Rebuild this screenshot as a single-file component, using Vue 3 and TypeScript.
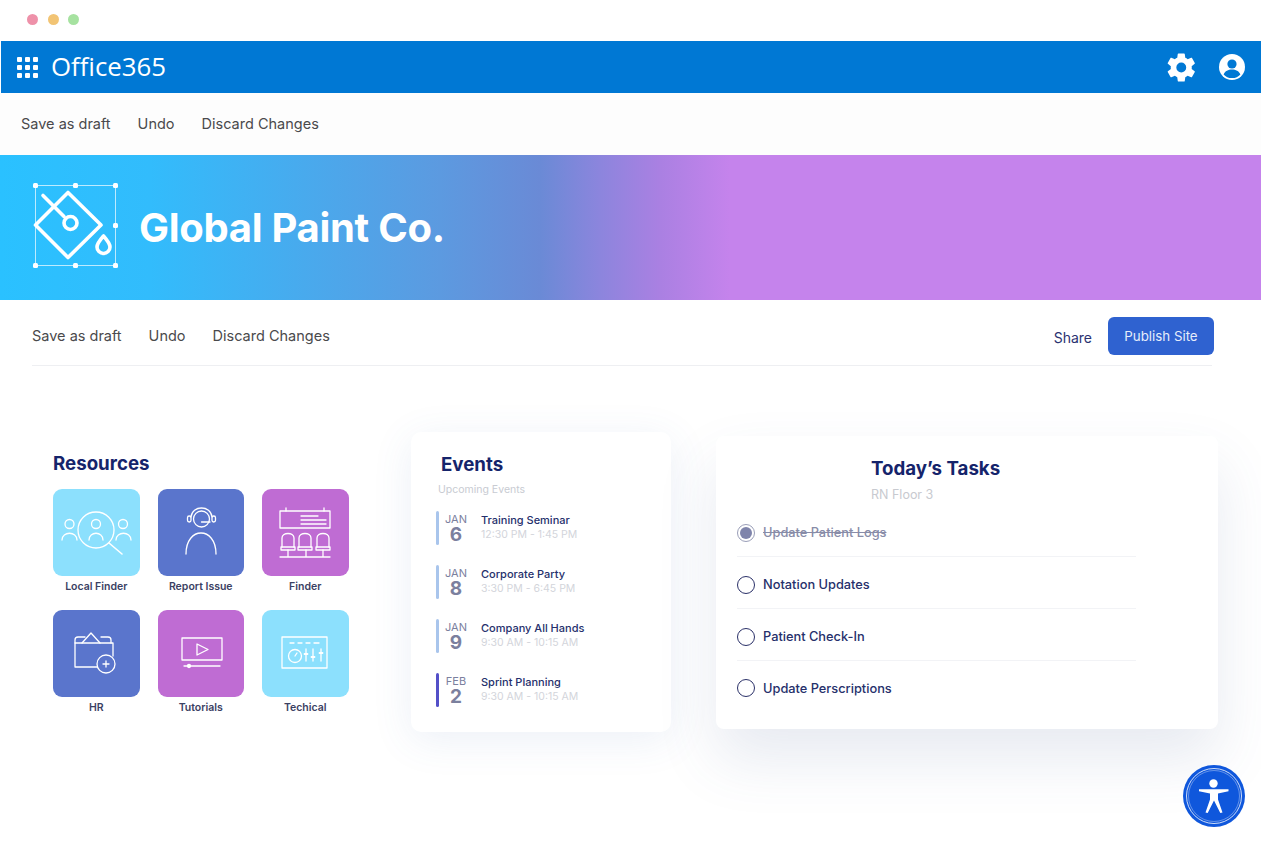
<script setup lang="ts">
const draftActions = ['Save as draft', 'Undo', 'Discard Changes'];

const resources = [
  { name: 'Local Finder', color: '#8ce0fd', icon: 'finder' },
  { name: 'Report Issue', color: '#5a75cc', icon: 'support' },
  { name: 'Finder', color: '#bf6cd3', icon: 'seats' },
  { name: 'HR', color: '#5a75cc', icon: 'folder' },
  { name: 'Tutorials', color: '#bf6cd3', icon: 'video' },
  { name: 'Techical', color: '#8ce0fd', icon: 'mixer' },
];

const events = [
  { month: 'JAN', day: 6, title: 'Training Seminar', time: '12:30 PM - 1:45 PM', bar: '#a9c5ec' },
  { month: 'JAN', day: 8, title: 'Corporate Party', time: '3:30 PM - 6:45 PM', bar: '#a9c5ec' },
  { month: 'JAN', day: 9, title: 'Company All Hands', time: '9:30 AM - 10:15 AM', bar: '#a9c5ec' },
  { month: 'FEB', day: 2, title: 'Sprint Planning', time: '9:30 AM - 10:15 AM', bar: '#5350c8' },
];

const tasks = [
  { label: 'Update Patient Logs', done: true },
  { label: 'Notation Updates', done: false },
  { label: 'Patient Check-In', done: false },
  { label: 'Update Perscriptions', done: false },
];
</script>

<template>
  <div class="window">
    <div class="titlebar">
      <span class="dot red"></span>
      <span class="dot yellow"></span>
      <span class="dot green"></span>
    </div>

    <header class="appbar">
      <div class="waffle">
        <span v-for="n in 9" :key="n"></span>
      </div>
      <span class="brand">Office365</span>
      <div class="appbar-icons">
        <svg width="33" height="33" viewBox="0 0 24 24" fill="#fff">
          <path d="M19.4 13c.05-.33.08-.66.08-1s-.03-.67-.08-1l2.15-1.67c.2-.15.25-.42.12-.64l-2.04-3.53c-.13-.22-.39-.3-.62-.22l-2.54 1.02c-.53-.4-1.1-.74-1.72-1l-.38-2.7A.5.5 0 0 0 13.87 1.8H9.79a.5.5 0 0 0-.5.42l-.38 2.7c-.62.26-1.2.6-1.72 1L4.65 4.9c-.23-.09-.49 0-.62.22L1.99 8.69c-.13.22-.08.49.12.64L4.26 11c-.05.33-.09.67-.09 1s.04.67.09 1l-2.15 1.67c-.2.15-.25.42-.12.64l2.04 3.53c.13.22.39.3.62.22l2.54-1.02c.53.4 1.1.74 1.72 1l.38 2.7c.04.24.25.42.5.42h4.08c.25 0 .46-.18.5-.42l.38-2.7c.62-.26 1.2-.6 1.72-1l2.54 1.02c.23.09.49 0 .62-.22l2.04-3.53c.13-.22.08-.49-.12-.64L19.4 13zM11.83 15.6a3.6 3.6 0 1 1 0-7.2 3.6 3.6 0 0 1 0 7.2z" />
        </svg>
        <svg width="28" height="28" viewBox="0 0 28 28">
          <circle cx="14" cy="14" r="13" fill="#fff" />
          <circle cx="14" cy="11" r="4.6" fill="#0078d4" />
          <path d="M5.6 21.4c1.5-3.6 4.6-5 8.4-5s6.900 1.400 8.400 5A11 11 0 0 1 14 25a11 11 0 0 1-8.400-3.600z" fill="#0078d4" />
        </svg>
      </div>
    </header>

    <nav class="toolbar">
      <a v-for="item in draftActions" :key="item">{{ item }}</a>
    </nav>

    <section class="hero">
      <svg class="logo" width="92" height="92" viewBox="0 0 92 92" fill="none" stroke="#fff">
        <rect x="3.500" y="3.500" width="80" height="80" stroke-width=".8" opacity=".85" />
        <g fill="#fff" stroke="none">
          <rect x="1" y="1" width="5" height="5" rx="1.500" />
          <rect x="41" y="1" width="5" height="5" rx="1.500" />
          <rect x="81" y="1" width="5" height="5" rx="1.500" />
          <rect x="81" y="41" width="5" height="5" rx="1.500" />
          <rect x="1" y="81" width="5" height="5" rx="1.500" />
          <rect x="41" y="81" width="5" height="5" rx="1.500" />
          <rect x="81" y="81" width="5" height="5" rx="1.500" />
        </g>
        <g stroke-width="3.600" stroke-linejoin="round" stroke-linecap="round">
          <path d="M36 10.500 69 43 36 75.500 3.500 43z" />
          <path d="M11 13.500 32 34.500" />
          <circle cx="38.500" cy="41" r="6.500" />
          <path d="M71.500 54c-4 4.500-6.500 7.500-6.500 11a6.500 6.500 0 0 0 13 0c0-3.500-2.500-6.500-6.500-11z" />
        </g>
      </svg>
      <h1>Global Paint Co.</h1>
    </section>

    <div class="subbar">
      <nav class="subbar-actions">
        <a v-for="item in draftActions" :key="item">{{ item }}</a>
      </nav>
      <a class="share">Share</a>
      <button class="publish">Publish Site</button>
    </div>

    <main class="content">
      <section class="resources">
        <h2>Resources</h2>
        <div class="tiles">
          <div v-for="res in resources" :key="res.name" class="tile">
            <div class="tile-box" :style="{ background: res.color }">
              <svg width="87" height="87" viewBox="0 0 87 87" fill="none" stroke="#fff" stroke-width="1.300" stroke-linecap="round" stroke-linejoin="round">
                <g v-if="res.icon === 'finder'">
                  <circle cx="43" cy="41" r="18" />
                  <path d="M56 54 69 65" stroke-width="1.600" />
                  <circle cx="43" cy="35" r="4.500" />
                  <path d="M36 51c0-9 14-9 14 0" />
                  <circle cx="16.500" cy="35" r="4.500" />
                  <path d="M9 51c0-9 15-9 15 0" />
                  <circle cx="70" cy="35" r="4.500" />
                  <path d="M63 51c0-9 15-9 15 0" />
                </g>
                <g v-else-if="res.icon === 'support'">
                  <path d="M28 65c0-28 30-28 30 0" />
                  <path d="M33 28c1-12 20-12 21 0" />
                  <circle cx="43.500" cy="30" r="8" />
                  <rect x="29.500" y="27" width="3.500" height="6" rx="1.700" />
                  <rect x="54" y="27" width="3.500" height="6" rx="1.700" />
                  <path d="M43.500 33H52" />
                </g>
                <g v-else-if="res.icon === 'seats'">
                  <rect x="18" y="22" width="50" height="17" />
                  <path d="M24 22v-3M62 22v-3M39 27h17M39 31h25M39 35h25" />
                  <path d="M20 58V49c0-6 12-6 12 0v9M37 58V49c0-6 12-6 12 0v9M55 58V49c0-6 12-6 12 0v9" />
                  <path d="M19 58h14v3H19zM36 58h14v3H36zM54 58h14v3H54z" />
                  <path d="M18 68h50M26 61v7M44 61v7M61 61v7" />
                </g>
                <g v-else-if="res.icon === 'folder'">
                  <path d="M44 57H22V33h38v13" />
                  <path d="M22 33v-3c0-2 1-3 3-3h7M48 27h7c2 0 3 1 3 3v3" />
                  <path d="M29 33l9-10 9 10" />
                  <circle cx="53" cy="54" r="9" />
                  <path d="M53 51v6M50 54h6" />
                </g>
                <g v-else-if="res.icon === 'video'">
                  <rect x="24" y="28" width="40" height="22" />
                  <path d="M39 34v11l11-5.500z" />
                  <path d="M26 56h36" />
                  <circle cx="31" cy="56" r="1.500" fill="#fff" />
                </g>
                <g v-else>
                  <rect x="20" y="27" width="45" height="31" />
                  <path d="M28 33h4M36 33h4M44 33h4M52 33h5" />
                  <circle cx="33" cy="46" r="6.500" />
                  <path d="M33 46l2-3" />
                  <path d="M44 39v12M51 39v12M59 39v12" />
                  <path d="M42.500 44h3M49.500 47h3M57.500 43h3" stroke-width="1.800" />
                </g>
              </svg>
            </div>
            <span class="tile-label">{{ res.name }}</span>
          </div>
        </div>
      </section>

      <section class="events">
        <h2>Events</h2>
        <p class="events-sub">Upcoming Events</p>
        <div v-for="ev in events" :key="ev.title + ev.day" class="event">
          <span class="event-bar" :style="{ background: ev.bar }"></span>
          <div class="event-date">
            <span class="month">{{ ev.month }}</span>
            <span class="day">{{ ev.day }}</span>
          </div>
          <div class="event-info">
            <span class="event-title">{{ ev.title }}</span>
            <span class="event-time">{{ ev.time }}</span>
          </div>
        </div>
      </section>

      <section class="tasks">
        <h2>Today’s Tasks</h2>
        <p class="tasks-sub">RN Floor 3</p>
        <ul>
          <li v-for="task in tasks" :key="task.label" :class="{ done: task.done }">
            <span class="radio"></span>
            <span class="task-label">{{ task.label }}</span>
          </li>
        </ul>
      </section>
    </main>

    <button class="a11y" aria-label="Accessibility">
      <svg width="62" height="62" viewBox="0 0 62 62" fill="none">
        <circle cx="31" cy="31" r="27.500" stroke="#fff" stroke-width=".8" />
        <circle cx="31" cy="31" r="25.500" stroke="#fff" stroke-width=".6" opacity=".6" />
        <circle cx="30.500" cy="18.500" r="4.200" fill="#fff" />
        <path d="M16 24.300h29.500v1.900l-10.500 2.200v6.100l4.500 13-2.200.6-6.300-12.600-6.300 12.600-2.200-.6 4.500-13v-6.100L16 26.200z" fill="#fff" />
      </svg>
    </button>
  </div>
</template>

<style scoped>
.window {
  position: relative;
  width: 1261px;
  height: 844px;
  overflow: hidden;
  background: #fff;
  font-family: Inter, "Liberation Sans", sans-serif;
}

.titlebar {
  height: 41px;
  display: flex;
  gap: 9.500px;
  padding: 14px 0 0 27px;
  box-sizing: border-box;
}

.dot {
  width: 11px;
  height: 11px;
  border-radius: 50%;
}
.red { background: #ee91a9; }
.yellow { background: #f2c474; }
.green { background: #a6e2a0; }

.appbar {
  height: 52px;
  margin-left: 1px;
  background: #0078d4;
  display: flex;
  align-items: center;
  padding: 0 15px 0 16px;
  color: #fff;
}

.waffle {
  display: grid;
  grid-template-columns: repeat(3, 5px);
  gap: 3px;
  margin-right: 13px;
}
.waffle span {
  height: 5px;
  background: #fff;
  border-radius: 1px;
}

.brand {
  font-family: "Open Sans", sans-serif;
  font-size: 25.800px;
  line-height: 1;
}

.appbar-icons {
  margin-left: auto;
  display: flex;
  align-items: center;
  gap: 20px;
}

.toolbar {
  height: 62px;
  display: flex;
  align-items: center;
  gap: 27px;
  padding: 0 0 2px 21px;
  box-sizing: border-box;
  background: #fdfdfd;
  font-size: 14.500px;
  color: #4a4a4c;
}

.hero {
  height: 145px;
  display: flex;
  align-items: center;
  padding-left: 32px;
  background: linear-gradient(90deg, #2ac1ff 0, #32bcfc 150px, #5c9ae0 440px, #6a8ad6 540px, #8c85dd 600px, #aa80e2 660px, #c583ec 730px);
}

.logo {
  flex: none;
}

.hero h1 {
  margin: 0 0 0 15px;
  font-family: Inter, sans-serif;
  font-size: 40px;
  font-weight: 700;
  letter-spacing: -0.3px;
  color: #fff;
}

.subbar {
  height: 66px;
  margin: 0 49px 0 32px;
  padding-top: 6px;
  border-bottom: 1px solid #eeeff2;
  display: flex;
  align-items: center;
  box-sizing: border-box;
  font-size: 14.500px;
}

.subbar-actions {
  display: flex;
  gap: 27px;
  color: #4a4a4c;
}

.share {
  margin-left: auto;
  margin-top: 4px;
  font-size: 14px;
  color: #2b3270;
}

.publish {
  width: 106px;
  height: 38px;
  margin-left: 16px;
  margin-right: -2px;
  border: none;
  border-radius: 6px;
  background: #2f62d0;
  color: #e6edfb;
  font-family: Inter, sans-serif;
  font-size: 13.300px;
}

.content {
  display: flex;
  align-items: flex-start;
  padding-left: 53px;
}

.content h2 {
  margin: 0;
  font-size: 18.700px;
  line-height: 24px;
  font-weight: 700;
  color: #15246b;
}

.resources {
  width: 296px;
  margin-top: 86px;
}

.tiles {
  display: grid;
  grid-template-columns: repeat(3, 86.500px);
  grid-auto-rows: 121px;
  column-gap: 18px;
  margin-top: 13px;
}

.tile {
  display: flex;
  flex-direction: column;
  align-items: center;
}

.tile-box {
  width: 86.500px;
  height: 86.500px;
  border-radius: 9px;
}

.tile-label {
  margin-top: 4px;
  font-size: 10.500px;
  line-height: 14px;
  font-weight: 600;
  color: #3b4163;
}

.events {
  width: 260px;
  height: 300px;
  margin: 66px 0 0 62px;
  padding: 21px 0 0 25px;
  box-sizing: border-box;
  border-radius: 10px;
  background: #fff;
  box-shadow: 0 8px 40px rgba(70, 110, 180, 0.1);
}

.events h2 {
  margin-left: 5px;
}

.events-sub {
  margin: 6px 0 14px 2px;
  font-size: 10.500px;
  line-height: 14px;
  color: #c8cbd2;
}

.event {
  display: flex;
  align-items: center;
  height: 34px;
  margin-bottom: 20px;
}

.event-bar {
  flex: none;
  width: 3px;
  height: 34px;
  border-radius: 2px;
}

.event-date {
  width: 34px;
  display: flex;
  flex-direction: column;
  align-items: center;
}

.month {
  font-size: 11px;
  line-height: 13px;
  color: #7b809e;
}

.day {
  font-size: 19px;
  line-height: 17px;
  font-weight: 700;
  color: #7b809e;
}

.event-info {
  margin-left: 8px;
  margin-top: -1px;
  display: flex;
  flex-direction: column;
  gap: 1px;
}

.event-title {
  font-size: 11px;
  line-height: 14px;
  font-weight: 500;
  color: #25306c;
}

.event-time {
  font-size: 10.500px;
  line-height: 14px;
  color: #d3d5db;
}

.tasks {
  width: 502px;
  height: 293px;
  margin: 70px 0 0 45px;
  padding: 21px 0 0 21px;
  box-sizing: border-box;
  border-radius: 8px;
  background: #fff;
  box-shadow: 0 30px 60px rgba(70, 90, 150, 0.13);
}

.tasks h2 {
  margin-left: 134px;
}

.tasks-sub {
  margin: 5px 0 0 134px;
  font-size: 12.500px;
  line-height: 18px;
  color: #c8cad0;
}

.tasks ul {
  width: 399px;
  margin: 0;
  padding: 1px 0 0;
  list-style: none;
}

.tasks li {
  display: flex;
  align-items: center;
  gap: 8px;
  height: 52px;
  padding-top: 4px;
  box-sizing: border-box;
  border-bottom: 1px solid #f2f3f6;
  font-size: 12.800px;
  font-weight: 500;
  color: #26306b;
}

.tasks li:last-child {
  height: 50px;
  border-bottom: none;
}

.radio {
  position: relative;
  flex: none;
  width: 18px;
  height: 18px;
  box-sizing: border-box;
  border: 1.500px solid #2a3068;
  border-radius: 50%;
}

.done {
  color: #888ca8 !important;
}

.done .task-label {
  text-decoration: line-through;
}

.done .radio {
  border-color: #9a9eb8;
}

.done .radio::after {
  content: "";
  position: absolute;
  inset: 2px;
  border-radius: 50%;
  background: #7f84ab;
}

.a11y {
  position: absolute;
  left: 1183px;
  top: 765px;
  width: 62px;
  height: 62px;
  padding: 0;
  border: none;
  border-radius: 50%;
  background: #0f57dc;
}

.a11y svg {
  display: block;
}
</style>

<style>
body {
  margin: 0;
  background: #fff;
}
</style>
